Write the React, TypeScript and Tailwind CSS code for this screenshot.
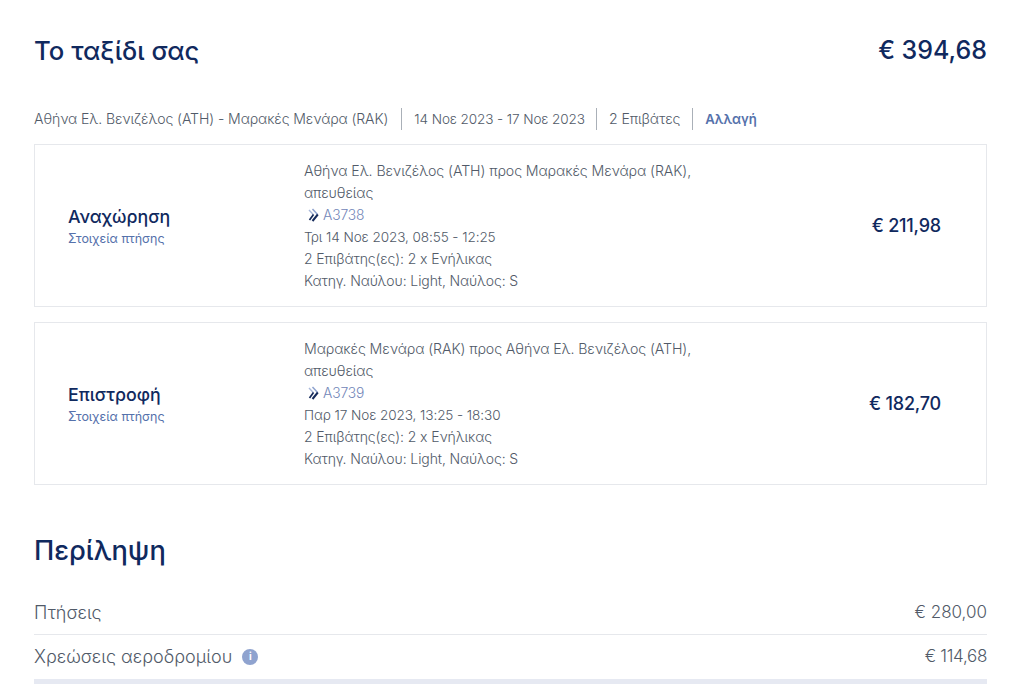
const font = "font-['Inter','Noto_Sans',sans-serif]";

function Chevrons() {
  return (
    <svg width="12" height="14" viewBox="0 0 12 14" className="mr-[3px] ml-[4px] shrink-0" aria-hidden="true">
      <path d="M1 2 L5.5 6.8" fill="none" stroke="#a9b8da" strokeWidth="1.4" />
      <path d="M4.5 1 L9.8 6.8" fill="none" stroke="#8fa3cf" strokeWidth="1.5" />
      <path d="M5.5 6.5 L1.5 12" fill="none" stroke="#14295a" strokeWidth="1.7" />
      <path d="M9.8 6.5 L4.5 13" fill="none" stroke="#14295a" strokeWidth="2" />
    </svg>
  );
}

function FlightCard(props: {
  title: string;
  route: string;
  flight: string;
  date: string;
  price: string;
  priceExtra: string;
}) {
  return (
    <div className="flex h-[163px] items-center border border-[#e6e8ec] pl-[33px]">
      <div className="w-[236px] shrink-0 pt-[5px]">
        <div className="text-[17.8px] leading-[22px] font-medium text-[#10295e]">{props.title}</div>
        <div className="text-[12.5px] leading-[22px] text-[#5571ab]">Στοιχεία πτήσης</div>
      </div>
      <div className="w-[420px] text-[14.2px] leading-[22px] font-light tracking-[-0.1px] text-[#515a68]">
        <div>{props.route},</div>
        <div>απευθείας</div>
        <div className="flex items-center text-[13.8px] text-[#7186b8]">
          <Chevrons />
          {props.flight}
        </div>
        <div className="text-[13.6px]">{props.date}</div>
        <div className="text-[14px]">2 Επιβάτης(ες): 2 x Ενήλικας</div>
        <div className="text-[14px]">Κατηγ. Ναύλου: Light, Ναύλος: S</div>
      </div>
      <div className={`ml-auto pr-[45px] text-[18px] font-medium tracking-[-0.2px] text-[#10295e] ${props.priceExtra}`}>{props.price}</div>
    </div>
  );
}

export default function App() {
  return (
    <div className={`${font} h-[690px] w-[1024px] overflow-hidden bg-white pr-[37px] pl-[34px]`}>
      <div className="flex h-[102px] items-center justify-between text-[#10295e]">
        <h1 className="text-[25.7px] font-medium">Το ταξίδι σας</h1>
        <div className="text-[25px] font-medium">€ 394,68</div>
      </div>

      <div className="flex h-[42px] items-center pb-[9px] font-light tracking-[-0.1px] text-[#515a68]">
        <span className="pr-[13px] text-[14.1px]">Αθήνα Ελ. Βενιζέλος (ATH) - Μαρακές Μενάρα (RAK)</span>
        <span className="border-l border-[#aab0b8] pr-[11px] pl-[12px] text-[13.55px] leading-[22px]">14 Νοε 2023 - 17 Νοε 2023</span>
        <span className="border-l border-[#aab0b8] pr-[12px] pl-[12px] text-[14.2px] leading-[22px]">2 Επιβάτες</span>
        <span className="border-l border-[#aab0b8] pl-[12px] text-[13.2px] leading-[22px] font-semibold text-[#5571ab]">Αλλαγή</span>
      </div>

      <div className="flex flex-col gap-[15px]">
        <FlightCard
          title="Αναχώρηση"
          route="Αθήνα Ελ. Βενιζέλος (ATH) προς Μαρακές Μενάρα (RAK)"
          flight="A3738"
          date="Τρι 14 Νοε 2023, 08:55 - 12:25"
          price="€ 211,98"
          priceExtra=""
        />
        <FlightCard
          title="Επιστροφή"
          route="Μαρακές Μενάρα (RAK) προς Αθήνα Ελ. Βενιζέλος (ATH)"
          flight="A3739"
          date="Παρ 17 Νοε 2023, 13:25 - 18:30"
          price="€ 182,70"
          priceExtra="pb-[1px]"
        />
      </div>

      <h2 className="mt-[46px] text-[27.2px] leading-[40px] font-medium text-[#10295e]">Περίληψη</h2>

      <div className="mt-[20px] flex h-[44px] items-center justify-between border-b border-[#e6e8ec] font-light text-[#515a68]">
        <span className="text-[18px]">Πτήσεις</span>
        <span className="text-[17px]">€ 280,00</span>
      </div>
      <div className="flex h-[44px] items-center justify-between pb-[1px] font-light text-[#515a68]">
        <span className="flex items-center gap-[10px] text-[18px]">
          Χρεώσεις αεροδρομίου
          <span className="flex h-[16px] w-[16px] items-center justify-center rounded-full bg-[#8fa3cf] text-[10px] font-bold text-white">i</span>
        </span>
        <span className="text-[17px] tracking-[-0.3px]">€ 114,68</span>
      </div>
      <div className="h-[5px] bg-[#e6e9f2]" />
    </div>
  );
}
